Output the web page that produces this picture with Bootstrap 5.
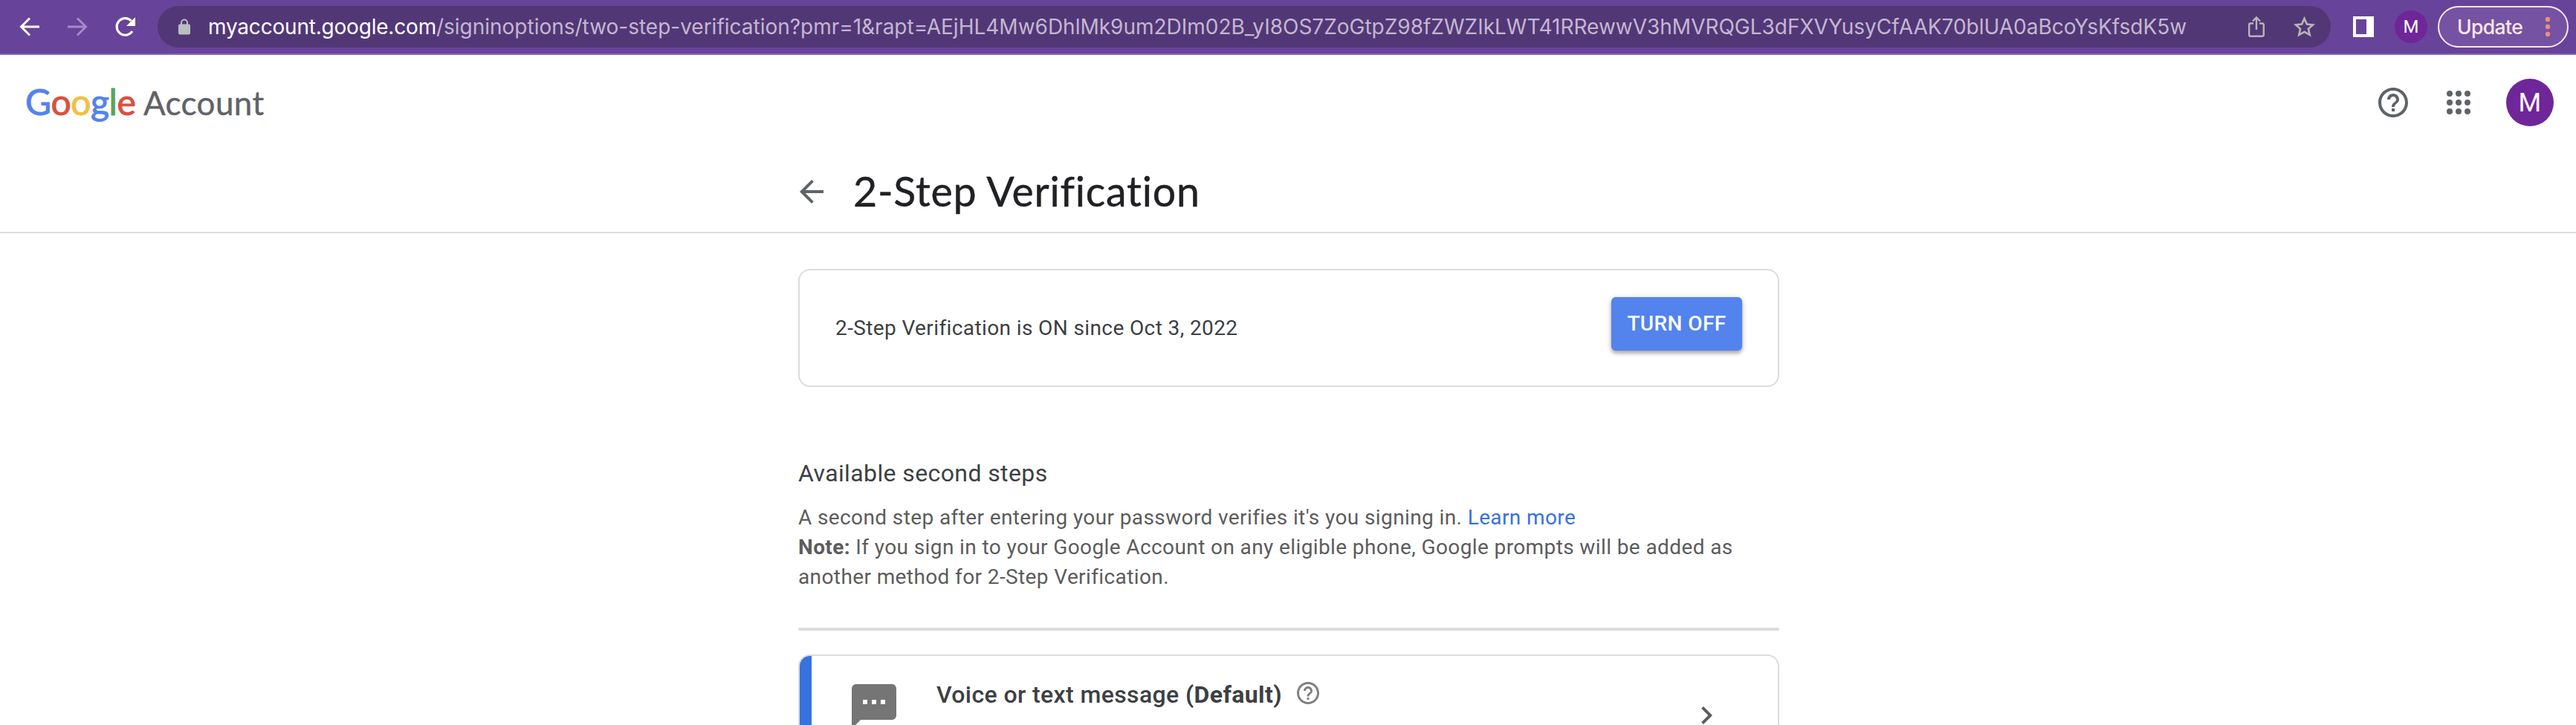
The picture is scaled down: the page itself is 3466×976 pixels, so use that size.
<!DOCTYPE html>
<html lang="en">
<head>
<meta charset="utf-8">
<title>2-Step Verification</title>
<link href="https://cdn.jsdelivr.net/npm/bootstrap@5.3.0/dist/css/bootstrap.min.css" rel="stylesheet">
<style>
body{height:976px;overflow:hidden;font-family:Roboto,sans-serif;font-size:28px;line-height:40px;letter-spacing:.39px;color:#3c4043;background:#fff}
svg{display:block;flex:none}
.browser-bar{height:74px;background:#68439a;border-bottom:2px solid #8d6bb5;padding:0 10px 0 16px;font-family:Inter,sans-serif;letter-spacing:0}
.nav-icons{width:196px;gap:16px}
.omnibox{height:56px;width:2924px;border-radius:28px;background:#523777;padding:0 20px 0 28px;color:#c3b7d0;white-space:nowrap}
.url-text{margin-left:24px;font-size:28px;line-height:56px;letter-spacing:-.01px}
.url-host{color:#fff;letter-spacing:-.2px}
.icon-star{margin-left:37px}
.disc{border-radius:50%;background:#6f2699;color:#fff;flex:none}
.disc-sm{width:44px;height:44px;margin:0 14px 0 28px;font:400 24px/44px Roboto,sans-serif}
.disc-lg{width:64px;height:64px;font:400 35px/66px Roboto,sans-serif}
.update-pill{width:176px;height:56px;border:2px solid #fbe8e6;border-radius:28px;background:#7652a3;color:#fbe8e6;padding:0 14px 0 24px;font-weight:500;font-size:26.5px;letter-spacing:-.6px}
.app-header{height:128px;padding:0 30px 0 34px}
.brand-line{font-family:Lato,sans-serif;color:#5f6368;line-height:56px;white-space:nowrap;margin-top:-2px}
.brand-g{font-size:48px;letter-spacing:-.4px;width:159px;-webkit-text-stroke:1px currentColor}
.brand-a{font-size:44px;-webkit-text-stroke:.4px currentColor}
.g-blue{color:#5383ec;-webkit-text-stroke-color:#5383ec}
.g-red{color:#d85140;-webkit-text-stroke-color:#d85140}
.g-yellow{color:#f1bf42;-webkit-text-stroke-color:#f1bf42}
.g-green{color:#58a55c;-webkit-text-stroke-color:#58a55c}
.icon-apps{margin:0 40px}
.title-row{height:112px;border-bottom:2px solid #dadce0}
.column-main{width:1320px;margin:0 0 0 1074px}
.icon-back{margin:2px 0 0 -6px}
.page-title{font-family:Lato,sans-serif;font-size:55.5px;line-height:64px;letter-spacing:.75px;font-weight:400;color:#202124;margin:-1px 0 0 32px;white-space:nowrap;-webkit-text-stroke:.4px #202124}
.panel{border:2px solid #dadce0;border-radius:16px;background:#fff}
.status-panel{height:159px;margin-top:48px;padding:36px 48px 0 48px}
.status-text{margin-top:22px}
.btn-off{width:176px;height:72px;background:#5383ec;color:#fff;border:0;border-radius:6px;font-size:28px;font-weight:500;padding:0;letter-spacing:.4px;box-shadow:0 4px 4px rgba(0,0,0,.2),0 2px 8px rgba(0,0,0,.2),0 0 2px rgba(0,0,0,.1)}
.steps-title{font-size:32px;line-height:48px;font-weight:400;margin:92px 0 0}
.steps-text{color:#5c5c5c;margin:16px 0 0}
.steps-text a{color:#3871e0;text-decoration:none}
.steps-text strong{font-weight:700}
.rule{height:4px;border-radius:2px;background:#dadce0;margin-top:48px}
.method-panel{height:95px;margin-top:32px;overflow:hidden;border-bottom:0;border-radius:16px 16px 0 0}
.accent{width:16px;background:#3871e0}
.icon-sms{margin:32px 0 0 48px}
.method-name{font-size:32px;line-height:44px;font-weight:500;white-space:nowrap;margin:30px 0 0 48px}
.icon-hint{margin:32px 0 0 17px}
.icon-open{margin:56px 72px 0 0}
</style>
</head>
<body>
<nav class="browser-bar d-flex align-items-center">
  <div class="nav-icons d-flex align-items-center">
    <svg width="48" height="48" viewBox="0 0 48 48" fill="none" stroke="#fff" stroke-width="3"><path d="M37 24H13M24 12.500L12.500 24 24 35.500"/></svg>
    <svg width="48" height="48" viewBox="0 0 48 48" fill="none" stroke="#a58ac9" stroke-width="3"><path d="M11 24h24M24 12.500L35.500 24 24 35.500"/></svg>
    <svg width="48" height="48" viewBox="0 0 48 48"><path d="M34 30A11.300 11.300 0 1 1 32.500 16" fill="none" stroke="#fff" stroke-width="3.200"/><path d="M38 11v12H26z" fill="#fff"/></svg>
  </div>
  <div class="omnibox d-flex align-items-center">
    <svg width="16" height="22" viewBox="0 0 16 22"><rect y="7.500" width="16" height="14" rx="2" fill="#b9bec1"/><path d="M4 9V5.500a4 4 0 0 1 8 0V9" fill="none" stroke="#b9bec1" stroke-width="2"/></svg>
    <div class="url-text"><span class="url-host">myaccount.google.com</span><span>/signinoptions/two-step-verification?pmr=1&amp;rapt=AEjHL4Mw6DhlMk9um2DIm02B_yI8OS7ZoGtpZ98fZWZIkLWT41RRewwV3hMVRQGL3dFXVYusyCfAAK70blUA0aBcoYsKfsdK5w</span></div>
    <svg class="ms-auto" width="24" height="30" viewBox="0 0 24 30" fill="none" stroke="#b9b5b6" stroke-width="2.400"><path d="M8 10.500H4A1.800 1.800 0 0 0 2.200 12.300V26A1.800 1.800 0 0 0 4 27.800H20A1.800 1.800 0 0 0 21.800 26V12.300A1.800 1.800 0 0 0 20 10.500H16M12 19V3M7 7.500l5-5 5 5"/></svg>
    <svg class="icon-star" width="31" height="30" viewBox="0 0 31 30"><path d="M15.500 4L18.900 11.600 27 12.400 20.900 17.900 22.700 26 15.500 21.800 8.300 26 10.100 17.900 4 12.400 12.100 11.600z" fill="none" stroke="#b9b5b6" stroke-width="2.600"/></svg>
  </div>
  <svg class="ms-auto" width="28" height="28"><path fill="#fff" fill-rule="evenodd" d="M0 0h28v28H0zM4 4v20h14V4z"/></svg>
  <div class="disc disc-sm text-center">M</div>
  <div class="update-pill d-flex align-items-center"><span>Update</span>
    <svg class="ms-auto" width="24" height="28" fill="#e88f80"><circle cx="12" cy="4" r="3.200"/><circle cx="12" cy="14" r="3.200"/><circle cx="12" cy="24" r="3.200"/></svg>
  </div>
</nav>
<header class="app-header d-flex align-items-center">
  <div class="brand-line d-flex align-items-baseline">
    <div class="brand-g"><span class="g-blue">G</span><span class="g-red">o</span><span class="g-yellow">o</span><span class="g-blue">g</span><span class="g-green">l</span><span class="g-red">e</span></div>
    <div class="brand-a">Account</div>
  </div>
  <svg class="ms-auto" width="48" height="48" viewBox="0 0 24 24" fill="#5f6368"><path d="M11 18h2v-2h-2v2zm1-16C6.480 2 2 6.480 2 12s4.480 10 10 10 10-4.480 10-10S17.520 2 12 2zm0 18c-4.410 0-8-3.590-8-8s3.590-8 8-8 8 3.590 8 8-3.590 8-8 8zm0-14c-2.210 0-4 1.790-4 4h2c0-1.100.9-2 2-2s2 .9 2 2c0 2-3 1.750-3 5h2c0-2.250 3-2.500 3-5 0-2.210-1.790-4-4-4z"/></svg>
  <svg class="icon-apps" width="48" height="48" viewBox="0 0 24 24" fill="#5f6368"><circle cx="6" cy="6" r="2"/><circle cx="12" cy="6" r="2"/><circle cx="18" cy="6" r="2"/><circle cx="6" cy="12" r="2"/><circle cx="12" cy="12" r="2"/><circle cx="18" cy="12" r="2"/><circle cx="6" cy="18" r="2"/><circle cx="12" cy="18" r="2"/><circle cx="18" cy="18" r="2"/></svg>
  <div class="disc disc-lg text-center">M</div>
</header>
<div class="title-row">
  <div class="column-main d-flex align-items-center h-100">
    <svg class="icon-back" width="48" height="48" viewBox="0 0 24 24" fill="#5f6368"><path d="M20 11H7.830l5.590-5.590L12 4l-8 8 8 8 1.410-1.410L7.830 13H20v-2z"/></svg>
    <h1 class="page-title">2-Step Verification</h1>
  </div>
</div>
<main class="column-main">
  <section class="panel status-panel d-flex align-items-start justify-content-between">
    <span class="status-text">2-Step Verification is ON since Oct 3, 2022</span>
    <button class="btn btn-off" type="button">TURN OFF</button>
  </section>
  <h2 class="steps-title">Available second steps</h2>
  <p class="steps-text">A second step after entering your password verifies it's you signing in. <a href="#">Learn more</a><br><strong>Note:</strong> If you sign in to your Google Account on any eligible phone, Google prompts will be added as<br>another method for 2-Step Verification.</p>
  <div class="rule"></div>
  <section class="panel method-panel d-flex align-items-start">
    <div class="accent align-self-stretch"></div>
    <svg class="icon-sms" width="72" height="72" viewBox="0 0 24 24" fill="#757575"><path d="M20 2H4c-1.100 0-1.990.9-1.990 2L2 22l4-4h14c1.100 0 2-.9 2-2V4c0-1.100-.9-2-2-2zM9 11H7V9h2v2zm4 0h-2V9h2v2zm4 0h-2V9h2v2z"/></svg>
    <div class="method-name">Voice or text message <strong>(Default)</strong></div>
    <svg class="icon-hint" width="36" height="36" viewBox="0 0 24 24" fill="#808080"><path d="M11 18h2v-2h-2v2zm1-16C6.480 2 2 6.480 2 12s4.480 10 10 10 10-4.480 10-10S17.520 2 12 2zm0 18c-4.410 0-8-3.590-8-8s3.590-8 8-8 8 3.590 8 8-3.590 8-8 8zm0-14c-2.210 0-4 1.790-4 4h2c0-1.100.9-2 2-2s2 .9 2 2c0 2-3 1.750-3 5h2c0-2.250 3-2.500 3-5 0-2.210-1.790-4-4-4z"/></svg>
    <svg class="icon-open ms-auto" width="48" height="48" viewBox="0 0 24 24" fill="#5c5c5c"><path d="M10 6L8.590 7.410 13.170 12l-4.580 4.590L10 18l6-6z"/></svg>
  </section>
</main>
<script src="https://cdn.jsdelivr.net/npm/bootstrap@5.3.0/dist/js/bootstrap.bundle.min.js"></script>
</body>
</html>
